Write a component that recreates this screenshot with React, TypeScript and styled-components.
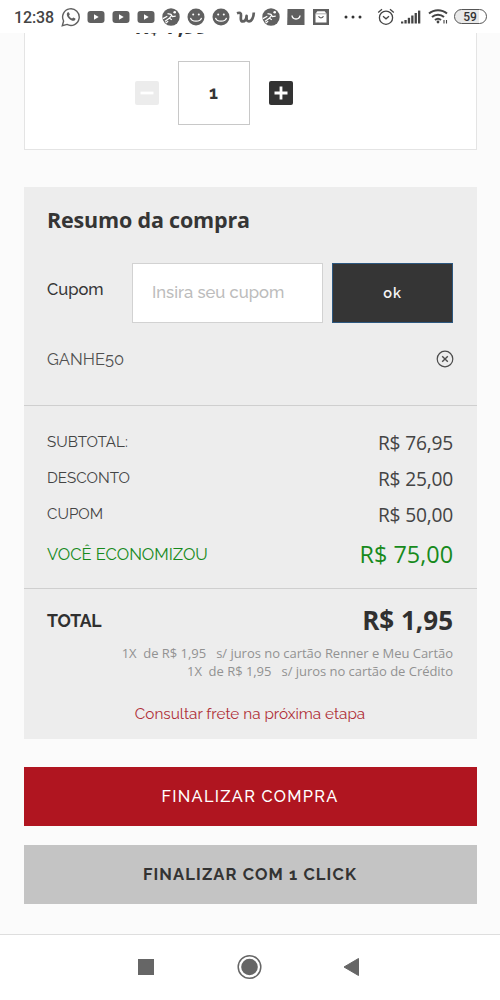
import React from 'react';
import styled, { createGlobalStyle } from 'styled-components';

const GlobalStyle = createGlobalStyle`
  * { box-sizing: border-box; }
  body { margin: 0; background: #fbfbfb; }
  button, input { font: inherit; margin: 0; }
`;

const sans = `'Open Sans', 'Noto Sans', sans-serif`;
const display = `Raleway, Lato, 'Open Sans', sans-serif`;

const Screen = styled.div`
  width: 500px;
  height: 1000px;
  display: flex;
  flex-direction: column;
  overflow: hidden;
  background: #fbfbfb;
  color: #353535;
  font-family: ${display};
`;

const StatusBar = styled.header`
  flex: none;
  height: 33px;
  display: flex;
  align-items: center;
  padding-left: 14px;
  background: #fff;
  color: #606060;
`;

const Clock = styled.time`
  width: 44.5px;
  font: 500 16px/33px Roboto, sans-serif;
  letter-spacing: -0.15px;
  color: #444;
  padding-top: 1px;
`;

const Slot = styled.span<{ $w?: number }>`
  width: ${(p) => p.$w ?? 25}px;
  flex: none;
  display: flex;
  justify-content: center;
`;

const Battery = styled.span`
  width: 33px;
  height: 15px;
  margin-left: 2px;
  border: 1.5px solid #555;
  border-radius: 8px;
  background: linear-gradient(90deg, #e9e9e9 78%, #fff 78%);
  color: #333;
  font: 500 12px/14px Roboto, sans-serif;
  text-align: center;
`;

const Content = styled.main`
  height: 901px;
  flex: none;
  overflow: hidden;
  padding: 0 23.5px;
  display: flex;
  flex-direction: column;
`;

const ProductCard = styled.section`
  flex: none;
  height: 117px;
  background: #fff;
  border: 1px solid #e4e4e4;
  border-top: 0;
  padding-left: 110px;
`;

const UnitPrice = styled.div`
  height: 28px;
  margin-top: -21px;
  font: 700 21px/28px ${sans};
`;

const Stepper = styled.div`
  display: flex;
  align-items: center;
  gap: 19px;
  margin-top: 21px;
`;

const StepButton = styled.button<{ $off?: boolean }>`
  width: 24px;
  height: 24px;
  padding: 0;
  border: 0;
  border-radius: 2px;
  background: ${(p) => (p.$off ? '#ececec' : '#333')};
  display: flex;
`;

const Quantity = styled.output`
  width: 72px;
  height: 64px;
  border: 1px solid #c8c8c8;
  text-align: center;
  font: 700 18px/62px ${display};
`;

const Summary = styled.section`
  flex: none;
  height: 552px;
  margin-top: 37px;
  background: #ededed;
`;

const Title = styled.h2`
  margin: 0;
  padding: 18px 23.5px 0;
  font: 700 21.5px/30px ${sans};
  letter-spacing: -0.18px;
`;

const CouponForm = styled.form`
  display: flex;
  padding: 28px 23.5px 0;
`;

const CouponLabel = styled.label`
  width: 85px;
  font-size: 16.5px;
  font-weight: 500;
  line-height: 52px;
`;

const CouponInput = styled.input`
  width: 191px;
  height: 60px;
  margin-right: 9px;
  padding: 0 19px 2px;
  border: 1px solid #d2d2d2;
  border-radius: 0;
  background: #fff;
  font-size: 16.6px;
  font-weight: 500;
  &::placeholder { color: #bcbcbc; opacity: 1; }
`;

const OkButton = styled.button`
  width: 121px;
  height: 60px;
  padding: 0 0 2px;
  border: 1px solid #2d5880;
  background: #353535;
  color: #f4f4f4;
  font-size: 14.5px;
  font-weight: 600;
  letter-spacing: 0.8px;
`;

const Applied = styled.div`
  height: 83px;
  display: flex;
  align-items: flex-start;
  justify-content: space-between;
  padding: 27px 23px 0 23.5px;
  font-size: 16.5px;
  line-height: 18px;
  color: #505050;
  border-bottom: 1px solid #cfcfcf;
`;

const Lines = styled.dl`
  margin: 0;
  height: 183px;
  padding: 20px 23.5px 0;
  border-bottom: 1px solid #cfcfcf;
`;

const Line = styled.div<{ $saved?: boolean }>`
  height: ${(p) => (p.$saved ? 42 : 36)}px;
  display: flex;
  align-items: center;
  justify-content: space-between;
  color: ${(p) => (p.$saved ? '#178a1c' : '#444')};
`;

const Term = styled.dt<{ $size?: number }>`
  font-size: ${(p) => p.$size ?? 15.2}px;
  line-height: 20px;
  margin-top: ${(p) => (p.$size ? -2 : -4)}px;
`;

const Amount = styled.dd<{ $size?: number; $bold?: boolean }>`
  margin: -3px 0 0;
  font-family: ${sans};
  font-size: ${(p) => p.$size ?? 19.2}px;
  letter-spacing: ${(p) => (p.$size ? 0 : -0.2)}px;
  font-weight: ${(p) => (p.$bold ? 700 : 400)};
  line-height: 32px;
`;

const TotalRow = styled.dl`
  margin: 0;
  height: 48px;
  padding: 18px 23.5px 0;
  display: flex;
  justify-content: space-between;
  color: #303030;
`;

const TotalLabel = styled.dt`
  font-size: 17.6px;
  font-weight: 700;
  line-height: 27px;
  letter-spacing: -0.2px;
`;

const Installments = styled.p`
  margin: 7px 23.5px 0 0;
  text-align: right;
  font: 400 13px/18px ${sans};
  letter-spacing: -0.03px;
  color: #929292;
  white-space: pre;
`;

const Shipping = styled.p`
  margin: 24px 0 0;
  text-align: center;
  font-size: 15.3px;
  line-height: 20px;
  color: #b03038;
`;

const Action = styled.button<{ $primary?: boolean }>`
  flex: none;
  height: 59px;
  margin-top: ${(p) => (p.$primary ? 28 : 19)}px;
  padding: 0 0 ${(p) => (p.$primary ? 0 : 2)}px;
  border: 0;
  background: ${(p) => (p.$primary ? '#b01520' : '#c4c4c4')};
  color: ${(p) => (p.$primary ? '#fff' : '#333')};
  font-size: ${(p) => (p.$primary ? 16.3 : 16.5)}px;
  font-weight: ${(p) => (p.$primary ? 500 : 700)};
  letter-spacing: ${(p) => (p.$primary ? 1.3 : 1.12)}px;
`;

const NavBar = styled.nav`
  flex: 1;
  display: flex;
  justify-content: center;
  border-top: 1.5px solid #dedede;
  background: #fff;
`;

const YouTube = () => (
  <svg width="18" height="14" viewBox="0 0 18 14">
    <rect x="0.5" y="1" width="17" height="12" rx="3" fill="#606060" />
    <path d="M7 4.3v5.4L11.7 7z" fill="#fff" />
  </svg>
);

const Runner = () => (
  <svg width="18" height="18" viewBox="0 0 18 18">
    <circle cx="9" cy="9" r="8.7" fill="#606060" />
    <circle cx="12.7" cy="4.3" r="1.3" fill="#fff" />
    <path d="M5.5 5.7 9 6.3l1.5 2.2 3.2-.4M9.8 7 7.5 10.2l2.3 1.5M7.3 10.2 3 13.2M1 10.6l4.3-2.3M3.5 15.2l2.7-2" stroke="#fff" strokeWidth="1.2" fill="none" />
  </svg>
);

const Smile = () => (
  <svg width="18" height="18" viewBox="0 0 18 18">
    <circle cx="9" cy="9" r="8.5" fill="#606060" />
    <circle cx="6.2" cy="6.5" r="1" fill="#fff" />
    <circle cx="11.8" cy="6.5" r="1" fill="#fff" />
    <path d="M3.5 9.8c1.2 4.5 9.8 4.5 11 0" stroke="#fff" strokeWidth="1.2" fill="none" />
  </svg>
);

const WhatsApp = () => (
  <svg width="20" height="20" viewBox="0 0 20 20">
    <path d="M1.3 18.7 2.6 14A8.3 8.3 0 1 1 6 17.4z" fill="none" stroke="#606060" strokeWidth="1.4" />
    <path d="M6.5 5.5c.5-.5 1.1-.5 1.4 0l.9 1.8c.1.4-.8 1.1-.7 1.4.6 1.3 1.6 2.2 2.9 2.8.4.1 1-1 1.4-.9l1.9.9c.5.3-.1 1.6-.7 2-1.5.9-3.6-.1-5.2-1.5C6.5 10.3 4.9 7.3 6.5 5.5z" fill="#606060" />
  </svg>
);

const Wish = () => (
  <svg width="20" height="16" viewBox="0 0 20 16">
    <path d="M1 4.2c2.7-1 4.3-.3 4 2.2-.4 3.3-.4 6 1.8 6 2.5 0 3.5-2.6 3.8-5.6-.2 3.4 0 5.6 2.3 5.6 2.9 0 4.8-4.4 4.9-8.9" fill="none" stroke="#606060" strokeWidth="2.7" strokeLinejoin="round" />
  </svg>
);

const BagSquare = () => (
  <svg width="18" height="18" viewBox="0 0 18 18">
    <path d="M.5 1h17v16H.2z" fill="#606060" />
    <path d="M5 7.5c.4 4.6 7.6 4.6 8 0" stroke="#fff" strokeWidth="1.4" fill="none" />
  </svg>
);

const ShopSquare = () => (
  <svg width="18" height="18" viewBox="0 0 18 18">
    <rect x="1" y="1" width="16" height="16" fill="#606060" />
    <path d="M5.3 3.3h7.4L14.5 5.8v8.7h-11V5.8z" fill="#fff" />
    <path d="M4 5.8h10" stroke="#999" strokeWidth=".8" />
    <path d="M6.7 8c.3 2.6 4.3 2.6 4.6 0" stroke="#606060" strokeWidth="1.2" fill="none" />
  </svg>
);

const Dots = () => (
  <svg width="18" height="4" viewBox="0 0 18 4" fill="#333">
    <circle cx="2" cy="2" r="1.5" /><circle cx="9" cy="2" r="1.5" /><circle cx="16" cy="2" r="1.5" />
  </svg>
);

const Alarm = () => (
  <svg width="18" height="18" viewBox="0 0 18 18" fill="none" stroke="#444" strokeWidth="1.3">
    <circle cx="9" cy="9.7" r="6.6" />
    <path d="M1.2 4.6 5 1.3M16.8 4.6 13 1.3M6 8.3 9 10.8l3-2.5" />
  </svg>
);

const Signal = () => (
  <svg width="20" height="14" viewBox="0 0 20 14" fill="#444">
    <rect x="0" y="11.5" width="2.3" height="2" /><rect x="3.4" y="10" width="2.3" height="3.5" />
    <rect x="6.8" y="7.8" width="2.3" height="5.7" /><rect x="10.2" y="5.5" width="2.3" height="8" />
    <rect x="13.6" y="3" width="2.3" height="10.5" /><rect x="17" y=".6" width="2.3" height="12.9" />
  </svg>
);

const Wifi = () => (
  <svg width="20" height="17" viewBox="0 0 20 17" fill="none" stroke="#444" strokeWidth="2">
    <path d="M1 5.5c5-4.5 13-4.5 18 0M4 9c3.3-3 8.7-3 12 0M7 12c1.7-1.5 4.3-1.5 6 0" />
    <circle cx="10" cy="14" r="1.4" fill="#444" stroke="none" />
    <path d="M16 12v3.5M18.5 12v3.5" strokeWidth="1.1" />
  </svg>
);

const Remove = () => (
  <svg width="18" height="18" viewBox="0 0 18 18" fill="none" stroke="#4c4c4c" strokeWidth="1.2">
    <circle cx="9" cy="9" r="7.8" />
    <path d="m6.2 6.2 5.6 5.6m0-5.6-5.6 5.6" strokeWidth="1.4" />
  </svg>
);

const lines = [
  { label: 'SUBTOTAL:', value: 'R$ 76,95' },
  { label: 'DESCONTO', value: 'R$ 25,00' },
  { label: 'CUPOM', value: 'R$ 50,00' },
];

export default function App() {
  return (
    <Screen>
      <GlobalStyle />
      <StatusBar>
        <Clock>12:38</Clock>
        <Slot><WhatsApp /></Slot>
        <Slot><YouTube /></Slot>
        <Slot><YouTube /></Slot>
        <Slot><YouTube /></Slot>
        <Slot><Runner /></Slot>
        <Slot><Smile /></Slot>
        <Slot><Smile /></Slot>
        <Slot><Wish /></Slot>
        <Slot><Runner /></Slot>
        <Slot><BagSquare /></Slot>
        <Slot><ShopSquare /></Slot>
        <Slot $w={39}><Dots /></Slot>
        <Slot $w={26}><Alarm /></Slot>
        <Slot><Signal /></Slot>
        <Slot $w={28}><Wifi /></Slot>
        <Battery>59</Battery>
      </StatusBar>
      <Content>
        <ProductCard>
          <UnitPrice>R$ 7,99</UnitPrice>
          <Stepper>
            <StepButton $off aria-label="Diminuir">
              <svg width="24" height="24"><path d="M5.5 12h13" stroke="#fff" strokeWidth="2.8" /></svg>
            </StepButton>
            <Quantity>1</Quantity>
            <StepButton aria-label="Aumentar">
              <svg width="24" height="24"><path d="M5.5 12h13M12 5.5v13" stroke="#fff" strokeWidth="2.8" /></svg>
            </StepButton>
          </Stepper>
        </ProductCard>
        <Summary>
          <Title>Resumo da compra</Title>
          <CouponForm>
            <CouponLabel htmlFor="coupon">Cupom</CouponLabel>
            <CouponInput id="coupon" placeholder="Insira seu cupom" />
            <OkButton type="button">ok</OkButton>
          </CouponForm>
          <Applied>GANHE50<Remove /></Applied>
          <Lines>
            {lines.map((l) => (
              <Line key={l.label}>
                <Term>{l.label}</Term>
                <Amount>{l.value}</Amount>
              </Line>
            ))}
            <Line $saved>
              <Term $size={16.5}>VOCÊ ECONOMIZOU</Term>
              <Amount $size={23.4}>R$ 75,00</Amount>
            </Line>
          </Lines>
          <TotalRow>
            <TotalLabel>TOTAL</TotalLabel>
            <Amount $size={26} $bold>R$ 1,95</Amount>
          </TotalRow>
          <Installments>
            {'1X  de R$ 1,95   s/ juros no cartão Renner e Meu Cartão\n1X  de R$ 1,95   s/ juros no cartão de Crédito'}
          </Installments>
          <Shipping>Consultar frete na próxima etapa</Shipping>
        </Summary>
        <Action $primary>FINALIZAR COMPRA</Action>
        <Action>FINALIZAR COM 1 CLICK</Action>
      </Content>
      <NavBar>
        <svg width="500" height="64" viewBox="0 0 500 64" fill="#666">
          <rect x="138" y="24" width="16" height="16" />
          <circle cx="249.5" cy="32" r="8.3" />
          <circle cx="249.5" cy="32" r="11.3" fill="none" stroke="#666" strokeWidth="1.5" />
          <path d="M344 32 358.5 23.5v17z" stroke="#666" strokeWidth="1" strokeLinejoin="round" />
        </svg>
      </NavBar>
    </Screen>
  );
}
